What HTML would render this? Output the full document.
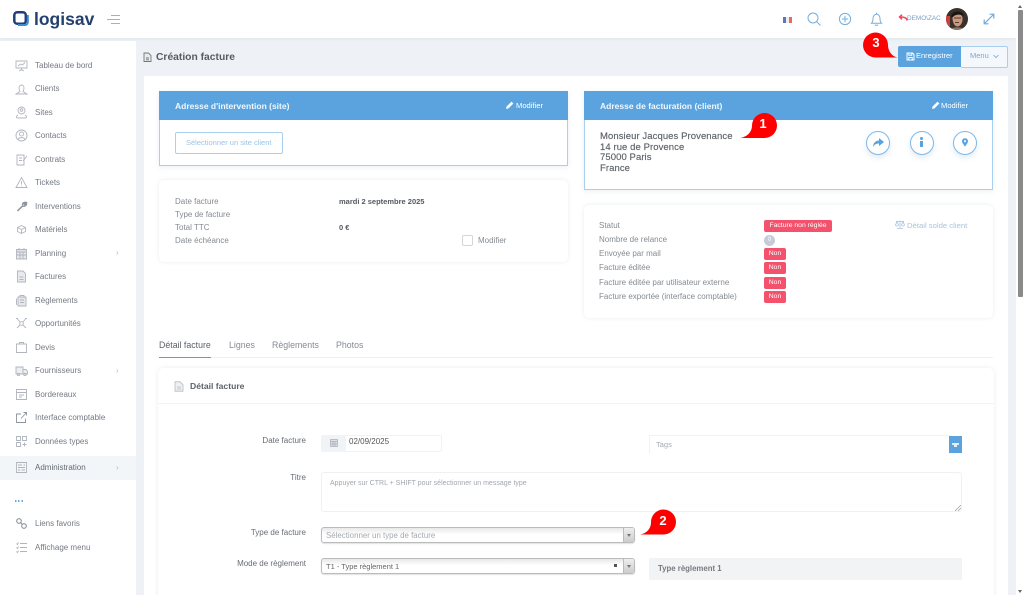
<!DOCTYPE html>
<html lang="fr"><head><meta charset="utf-8"><title>Création facture</title>
<style>
html,body{margin:0;padding:0;width:1024px;height:595px;overflow:hidden;background:#fff}
body{position:relative;font-family:"Liberation Sans",sans-serif;color:#666}
#p{position:absolute;left:0;top:0;width:1024px;height:595px;overflow:hidden;background:#eef2f6;filter:blur(.35px)}
.a,.t{position:absolute}
.t{white-space:nowrap;line-height:12px}
.nav{font-size:8px;color:#747a83;left:35px;margin-top:1px}
.ic{position:absolute;left:15px;width:13px;height:13px;fill:none;stroke:#b0b5bc;stroke-width:.9}
.lb{font-size:8px;color:#858b92;margin-top:1px}
.fl{font-size:8px;color:#666c74;text-align:right;width:120px;left:186px;margin-top:1px}
.red{position:absolute;background:#f4516c;border-radius:2px;color:#fff;font-size:6.8px;text-align:center;line-height:12px;height:12px;left:764px;width:22px}
.card{position:absolute;background:#fff;border-radius:5px;box-shadow:0 0 4px rgba(120,140,160,.16)}
.head{position:absolute;background:#5aa3de;color:#fff;height:29px}
.rnd{position:absolute;width:22px;height:22px;border:1px solid #7db8e8;border-radius:50%;top:131px;background:#fff;box-shadow:0 3px 6px rgba(120,160,200,.2)}
.sel{position:absolute;left:321px;width:312px;height:14px;border:1px solid #bbb;border-radius:3px;background:linear-gradient(#e8e8e8,#fff 45%,#fff);box-sizing:content-box;box-shadow:0 1px 1px rgba(0,0,0,.12)}
.arr{position:absolute;right:0;top:0;width:10px;height:14px;background:linear-gradient(#eee,#ccc);border-left:1px solid #bbb;border-radius:0 2px 2px 0}
.arr:after{content:"";position:absolute;left:3px;top:6px;border:2.5px solid transparent;border-top:3px solid #777}
.tab{font-size:8.8px;color:#858b93;top:339px}
</style></head><body><div id="p">

<!-- header -->
<div class="a" style="left:0;top:0;width:1016px;height:38px;background:#fff;box-shadow:0 1px 3px rgba(120,140,160,.12)"></div>
<svg class="a" style="left:13px;top:10px" width="16" height="18" fill="none"><rect x="1.300" y="2.300" width="11.500" height="11.500" rx="3" stroke="#1f3f77" stroke-width="2.500"/><path d="M5 15H12C13.500 15 14.800 13.800 14.800 12V5" stroke="#3b8ad3" stroke-width="2"/></svg>
<div class="t" style="left:34px;top:9px;font-size:17.500px;line-height:20px;font-weight:bold;color:#24406f">logisav</div>
<svg class="a" style="left:106px;top:14px" width="15" height="11" fill="none" stroke="#aab0b8" stroke-width=".9"><path d="M5 1.500H14M1 5.500H14M5 9.500H14"/></svg>

<div class="a" style="left:783px;top:17px;width:3px;height:6px;background:#5a78b8"></div>
<div class="a" style="left:786px;top:17px;width:3px;height:6px;background:#eee"></div>
<div class="a" style="left:789px;top:17px;width:3px;height:6px;background:#e66"></div>
<svg class="a" style="left:806px;top:11px" width="16" height="16" fill="none" stroke="#74aee0" stroke-width="1"><circle cx="7" cy="7" r="5"/><path d="M10.800 10.800L14.500 14.500"/></svg>
<svg class="a" style="left:838px;top:12px" width="14" height="14" fill="none" stroke="#74aee0" stroke-width="1"><circle cx="7" cy="7" r="5.600"/><path d="M7 3.800V10.200M3.800 7H10.200"/></svg>
<svg class="a" style="left:870px;top:12px" width="13" height="14" fill="none" stroke="#74aee0" stroke-width="1"><path d="M1.500 11.200C3 9.800 3 8 3 6.500 3 4 4.500 2.300 6.500 2.300S10 4 10 6.500C10 8 10 9.800 11.500 11.200ZM5 12.600C5.500 13.600 7.500 13.600 8 12.600M6.500 2.300V.8"/></svg>
<svg class="a" style="left:898px;top:14px" width="10" height="8" fill="none" stroke="#f0475a" stroke-width="1.500"><path d="M9 6.500C9 4 7 3 2.500 3M4 .7L1.500 3L4 5.300"/></svg>
<div class="t" style="left:907px;top:13px;font-size:6.400px;color:#7a9fc6">DEMO\ZAC</div>
<svg class="a" style="left:946px;top:8px" width="22" height="22"><defs><clipPath id="av"><circle cx="11" cy="11" r="11"/></clipPath></defs><g clip-path="url(#av)"><rect width="22" height="22" fill="#3a302c"/><rect x="0" y="8" width="4" height="14" fill="#c9403c"/><path d="M6.500 10C6.500 5 16 4 16.500 10C17 15 14 18.500 11.500 18.500C9 18.500 6.500 15 6.500 10Z" fill="#c99a80"/><path d="M5 9C5 3 16 1 18 8C15 6 9 6 7 9Z" fill="#1c1513"/><path d="M8 10H15M9 14.500H13" stroke="#5a3a2c" stroke-width="1"/><path d="M4 22C6 18.500 16 18.500 19 22Z" fill="#8a7a70"/></g></svg>
<svg class="a" style="left:983px;top:13px" width="12" height="12" fill="none" stroke="#6fabe0" stroke-width="1.200"><path d="M1.500 10.500L10.500 1.500M6.500 1.200H10.800V5.500M1.200 6.500V10.800H5.500"/></svg>

<!-- scrollbar -->
<div class="a" style="left:1016px;top:0;width:8px;height:595px;background:#fff"></div>
<div class="a" style="left:1018px;top:10px;width:5px;height:287px;background:#8a8a8a;border-radius:1px"></div>
<div class="a" style="left:1018px;top:3px;border:2.500px solid transparent;border-bottom:3px solid #666"></div>
<div class="a" style="left:1018px;top:590px;border:2.500px solid transparent;border-top:3px solid #666"></div>

<!-- sidebar -->
<div class="a" style="left:0;top:41px;width:136px;height:554px;background:#fff"></div>
<div class="a" style="left:0;top:456px;width:136px;height:24px;background:#f3f6f8"></div>

<svg class="ic" style="top:59px" viewBox="0 0 13 13"><path d="M1 2H12V9H1ZM3 7L5.500 5L7.500 6L10 3.500M6.500 9V11M4 12L6.500 10.500L9 12"/></svg>
<svg class="ic" style="top:82px" viewBox="0 0 13 13"><path d="M4 6C4 2 9 2 9 6C9 8 8 9 8 9.500L12 12H1L5 9.500C5 9 4 8 4 6Z"/></svg>
<svg class="ic" style="top:106px" viewBox="0 0 13 13"><circle cx="6.500" cy="4.500" r="3.500"/><circle cx="6.500" cy="4" r="1.300"/><path d="M3 9C1 10 1 12 3 12H10C12 12 12 10 10 9"/></svg>
<svg class="ic" style="top:129px" viewBox="0 0 13 13"><circle cx="6.500" cy="6.500" r="5.500"/><circle cx="6.500" cy="5" r="2"/><path d="M3 10.500C4 8 9 8 10 10.500"/></svg>
<svg class="ic" style="top:153px" viewBox="0 0 13 13"><path d="M2 2H9V12H2ZM4 5H7M4 7.500H7M8 8L12 3"/></svg>
<svg class="ic" style="top:176px" viewBox="0 0 13 13"><path d="M6.500 1.500L12 11.500H1ZM6.500 5V8.500M6.500 9.500V10.300"/></svg>
<svg class="ic" style="top:200px;stroke:#8d939b;stroke-width:1.500" viewBox="0 0 13 13"><path d="M2.500 11L8 5.500M7.500 5C7.500 3 9.500 2 11 2.500L9.500 4L10 4.500L11.500 3.500C11.500 5.500 9.500 6.500 8 6"/></svg>
<svg class="ic" style="top:223px" viewBox="0 0 13 13"><path d="M6.500 2.500L10.500 4.500V8.500L6.500 10.500L2.500 8.500V4.500ZM2.500 4.500L6.500 6.500L10.500 4.500M6.500 6.500V10.500"/></svg>
<svg class="ic" style="top:247px" viewBox="0 0 13 13"><path d="M1.500 2.500H11.500V12H1.500Z" fill="#e6e8eb"/><path d="M1.500 5H11.500M4 1V3.500M9 1V3.500M1.500 8H11.500M5 5V12M8 5V12"/></svg>
<svg class="ic" style="top:270px" viewBox="0 0 13 13"><path d="M2.500 1H8L10.500 3.500V12H2.500Z" fill="#e8eaed"/><path d="M4.500 7H8.500M4.500 9.500H8.500"/></svg>
<svg class="ic" style="top:294px" viewBox="0 0 13 13"><path d="M3 3H11V12H3Z" fill="#e6e8eb"/><path d="M1.500 4.500V11M5 3V1.500H9V3M5 6H9M5 8.500H9"/></svg>
<svg class="ic" style="top:317px" viewBox="0 0 13 13"><circle cx="6.500" cy="6.500" r="1.800"/><path d="M5 5L2.500 2M8 5L10.500 2M5 8L2 11M8 8L11 11M1 1.500H3M10 1.500H12"/></svg>
<svg class="ic" style="top:341px" viewBox="0 0 13 13"><path d="M1.500 3H11.500V11.500H1.500ZM4.500 3V1.500H8.500V3"/></svg>
<svg class="ic" style="top:364px" viewBox="0 0 13 13"><path d="M1 3H8V10H1ZM8 5.500H11L12.500 7.500V10H8" fill="#eceef0"/><circle cx="3.500" cy="10.500" r="1.200"/><circle cx="10" cy="10.500" r="1.200"/></svg>
<svg class="ic" style="top:388px" viewBox="0 0 13 13"><path d="M1.500 1.500H11.500V11.500H1.500ZM1.500 4.500H11.500M4 7H9M4 9H7"/></svg>
<svg class="ic" style="top:411px;stroke:#8d939b" viewBox="0 0 13 13"><path d="M10.500 7.500V11.500H1.500V3H6M6 7.500L11.500 1.500M8.500 1.500H11.500V4.500"/></svg>
<svg class="ic" style="top:435px" viewBox="0 0 13 13"><path d="M1.500 1.500H5.500V5.500H1.500ZM7.500 1.500H11.500V5.500H7.500ZM1.500 7.500H5.500V11.500H1.500ZM7.500 9.500H11.500M9.500 7.500V11.500"/></svg>
<svg class="ic" style="top:461px" viewBox="0 0 13 13"><path d="M1.500 1.500H11.500V11.500H1.500ZM3 4H7M8.500 4H10M3 6.500H10M3 9H5M6.500 9H10" /></svg>
<svg class="ic" style="top:517px;stroke:#8d939b;stroke-width:1.100" viewBox="0 0 13 13"><circle cx="4" cy="4" r="2.300"/><circle cx="9" cy="9" r="2.300"/><path d="M5.500 5.500L7.500 7.500"/></svg>
<svg class="ic" style="top:541px" viewBox="0 0 13 13"><path d="M5 2.500H12M5 6.500H12M5 10.500H12M1.500 2.500L2.500 3.500L3.500 1.500M1.500 6.500L2.500 7.500L3.500 5.500M1.500 10.500L2.500 11.500L3.500 9.500"/></svg>

<div class="t nav" style="top:59px">Tableau de bord</div>
<div class="t nav" style="top:82px">Clients</div>
<div class="t nav" style="top:106px">Sites</div>
<div class="t nav" style="top:129px">Contacts</div>
<div class="t nav" style="top:153px">Contrats</div>
<div class="t nav" style="top:176px">Tickets</div>
<div class="t nav" style="top:200px">Interventions</div>
<div class="t nav" style="top:223px">Matériels</div>
<div class="t nav" style="top:247px">Planning</div>
<div class="t nav" style="top:270px">Factures</div>
<div class="t nav" style="top:294px">Règlements</div>
<div class="t nav" style="top:317px">Opportunités</div>
<div class="t nav" style="top:341px">Devis</div>
<div class="t nav" style="top:364px">Fournisseurs</div>
<div class="t nav" style="top:388px">Bordereaux</div>
<div class="t nav" style="top:411px">Interface comptable</div>
<div class="t nav" style="top:435px">Données types</div>
<div class="t nav" style="top:461px;color:#636a74">Administration</div>
<div class="t nav" style="top:517px">Liens favoris</div>
<div class="t nav" style="top:541px">Affichage menu</div>
<div class="t" style="left:116px;top:247px;font-size:8px;color:#b5b9bf">›</div>
<div class="t" style="left:116px;top:365px;font-size:8px;color:#b5b9bf">›</div>
<div class="t" style="left:116px;top:462px;font-size:8px;color:#b5b9bf">›</div>
<div class="a" style="left:15px;top:500px;width:8px;height:1.500px;background:repeating-linear-gradient(90deg,#6aa9e0 0 1.500px,transparent 1.500px 3.200px)"></div>

<!-- sub header -->
<svg class="a" style="left:143px;top:52px" width="9" height="10" fill="#e8eaec" stroke="#777" stroke-width=".9"><path d="M1 1H5.500L8 3.500V9.500H1Z"/><path d="M3 6H6M3 7.800H6"/></svg>
<div class="t" style="left:156px;top:51px;font-size:10.300px;line-height:14px;font-weight:bold;color:#575c63">Création facture</div>
<div class="a" style="left:898px;top:46px;width:63px;height:21px;background:#5aa3de;border-radius:2px 0 0 2px"></div>
<svg class="a" style="left:906px;top:52px" width="9" height="9" fill="none" stroke="#fff" stroke-width="1"><path d="M1 1H6.500L8 2.500V8H1ZM2.800 1V3.300H5.800V1M2.800 8V5.500H6.200V8"/></svg>
<div class="t" style="left:916px;top:50px;font-size:7.500px;color:#fff">Enregistrer</div>
<div class="a" style="left:961px;top:46px;width:46px;height:20px;background:#f4f8fc;border:1px solid #a8cfee;border-left:0;border-radius:0 2px 2px 0"></div>
<div class="t" style="left:970px;top:50px;font-size:7.500px;color:#7aa7d0">Menu</div>
<svg class="a" style="left:993px;top:54px" width="6" height="5" fill="none" stroke="#7aa7d0" stroke-width=".8"><path d="M.5 1L3 3.500L5.500 1"/></svg>

<!-- main white -->
<div class="a" style="left:144px;top:76px;width:864px;height:519px;background:#fff"></div>

<!-- left panel -->
<div class="a" style="left:159px;top:91px;width:407px;height:73px;border:1px solid #a8cfee;background:#fff;box-shadow:0 1px 5px rgba(120,150,190,.15)"></div>
<div class="head" style="left:159px;top:91px;width:409px"></div>
<div class="t" style="left:175px;top:100px;font-size:8.500px;font-weight:bold;color:#fff;opacity:.92">Adresse d'intervention (site)</div>
<svg class="a" style="left:506px;top:101px" width="8" height="8" fill="#fff"><path d="M0 8L.6 5.500L5.500.6L7.400 2.500L2.500 7.400Z"/></svg>
<div class="t" style="left:516px;top:100px;font-size:7.600px;color:#fff">Modifier</div>
<div class="a" style="left:175px;top:132px;width:106px;height:20px;border:1px solid #a8cfee;border-radius:2px;background:#fff"></div>
<div class="t" style="left:186px;top:137px;font-size:7.500px;color:#9cc3e6">Sélectionner un site client</div>

<!-- right panel -->
<div class="a" style="left:584px;top:91px;width:407px;height:97px;border:1px solid #a8cfee;background:#fff;box-shadow:0 1px 5px rgba(120,150,190,.15)"></div>
<div class="head" style="left:584px;top:91px;width:409px"></div>
<div class="t" style="left:600px;top:100px;font-size:8.500px;font-weight:bold;color:#fff;opacity:.92">Adresse de facturation (client)</div>
<svg class="a" style="left:932px;top:101px" width="8" height="8" fill="#fff"><path d="M0 8L.6 5.500L5.500.6L7.400 2.500L2.500 7.400Z"/></svg>
<div class="t" style="left:941px;top:100px;font-size:7.600px;color:#fff">Modifier</div>
<div class="t" style="left:600px;top:132px;font-size:9.500px;line-height:10.500px;color:#5d6269;letter-spacing:.08px;-webkit-text-stroke:.15px #5d6269">Monsieur Jacques Provenance<br>14 rue de Provence<br>75000 Paris<br>France</div>
<div class="rnd" style="left:866px"></div>
<div class="rnd" style="left:910px"></div>
<div class="rnd" style="left:953px"></div>
<svg class="a" style="left:872px;top:138px" width="12" height="10" fill="#5aa3de"><path d="M7 0L12 4L7 8V5.500C4 5.500 2.500 6.500 1 9C1 5 3.500 2.700 7 2.500Z"/></svg>
<div class="a" style="left:920px;top:137px;width:3px;height:3px;background:#5aa3de;border-radius:50%"></div>
<div class="a" style="left:920px;top:141px;width:3px;height:6px;background:#5aa3de"></div>
<svg class="a" style="left:962px;top:138px" width="6" height="9" viewBox="0 0 7 10" fill="#5aa3de"><path d="M3.500 0C6 0 7 2 7 3.500C7 5.500 4.500 8 3.500 10C2.500 8 0 5.500 0 3.500C0 2 1 0 3.500 0Z"/><circle cx="3.500" cy="3.500" r="1.200" fill="#fff"/></svg>

<!-- left info card -->
<div class="card" style="left:159px;top:180px;width:409px;height:82px"></div>
<div class="t lb" style="left:175px;top:195px">Date facture</div>
<div class="t lb" style="left:175px;top:208px">Type de facture</div>
<div class="t lb" style="left:175px;top:221px">Total TTC</div>
<div class="t lb" style="left:175px;top:234px">Date échéance</div>
<div class="t" style="left:339px;top:196px;font-size:7.500px;font-weight:bold;color:#555a61">mardi 2 septembre 2025</div>
<div class="t" style="left:339px;top:222px;font-size:7.500px;font-weight:bold;color:#555a61">0 €</div>
<div class="a" style="left:462px;top:235px;width:9px;height:9px;border:1px solid #cfd6de;border-radius:2px;background:#fff"></div>
<div class="t lb" style="left:478px;top:234px">Modifier</div>

<!-- right info card -->
<div class="card" style="left:584px;top:205px;width:409px;height:113px"></div>
<div class="t lb" style="left:599px;top:219px">Statut</div>
<div class="t lb" style="left:599px;top:233px">Nombre de relance</div>
<div class="t lb" style="left:599px;top:247px">Envoyée par mail</div>
<div class="t lb" style="left:599px;top:261px">Facture éditée</div>
<div class="t lb" style="left:599px;top:276px">Facture éditée par utilisateur externe</div>
<div class="t lb" style="left:599px;top:290px">Facture exportée (interface comptable)</div>
<div class="red" style="top:220px;width:68px">Facture non réglée</div>
<div class="a" style="left:764px;top:235px;width:11px;height:11px;border-radius:50%;background:#c7cbd8;color:#fff;font-size:6px;line-height:11px;text-align:center">0</div>
<div class="red" style="top:248px">Non</div>
<div class="red" style="top:262px">Non</div>
<div class="red" style="top:277px">Non</div>
<div class="red" style="top:291px">Non</div>
<svg class="a" style="left:895px;top:220px" width="10" height="9" fill="none" stroke="#a9c3dc" stroke-width=".8"><path d="M5 .5V8M2 8.500H8M1 1.500H9M2 1.500L.5 5C1 6.500 3 6.500 3.500 5ZM8 1.500L6.500 5C7 6.500 9 6.500 9.500 5Z"/></svg>
<div class="t" style="left:907px;top:220px;font-size:7.700px;color:#a9c3dc">Détail solde client</div>

<!-- tabs -->
<div class="a" style="left:159px;top:357px;width:834px;height:1px;background:#eef1f4"></div>
<div class="a" style="left:159px;top:357px;width:52px;height:1px;background:#8d9299"></div>
<div class="t tab" style="left:159px;color:#5d6269">Détail facture</div>
<div class="t tab" style="left:229px">Lignes</div>
<div class="t tab" style="left:272px">Règlements</div>
<div class="t tab" style="left:336px">Photos</div>

<!-- detail card -->
<div class="card" style="left:158px;top:368px;width:836px;height:240px"></div>
<div class="a" style="left:158px;top:403px;width:836px;height:1px;background:#f1f3f5"></div>
<svg class="a" style="left:174px;top:381px" width="10" height="11" fill="#eef0f2" stroke="#b5bac0" stroke-width=".8"><path d="M1 .8H6L9 3.800V10.200H1Z"/><path d="M3 6H7M3 8H7"/></svg>
<div class="t" style="left:190px;top:380px;font-size:8.600px;font-weight:bold;color:#5d6269">Détail facture</div>

<div class="t fl" style="top:434px">Date facture</div>
<div class="t fl" style="top:471px">Titre</div>
<div class="t fl" style="top:526px">Type de facture</div>
<div class="t fl" style="top:557px">Mode de règlement</div>

<div class="a" style="left:321px;top:435px;width:119px;height:15px;border:1px solid #f0f3f6;border-radius:2px;background:#fff"></div>
<div class="a" style="left:321px;top:435px;width:25px;height:17px;background:#f1f4f7;border-radius:2px 0 0 2px"></div>
<svg class="a" style="left:330px;top:438px" width="8" height="9" fill="#dde0e4" stroke="#aab0b7" stroke-width=".7"><path d="M.5 1.500H7.500V8.500H.5ZM.5 3.500H7.500M.5 6H7.500M3 3.500V8.500M5 3.500V8.500"/></svg>
<div class="t" style="left:349px;top:436px;font-size:8px;color:#555">02/09/2025</div>

<div class="a" style="left:649px;top:435px;width:300px;height:18px;border:1px solid #f0f3f6;border-bottom:0;background:#fff"></div>
<div class="t" style="left:656px;top:439px;font-size:7.500px;color:#a6abb1">Tags</div>
<div class="a" style="left:949px;top:436px;width:13px;height:17px;background:#5aa3de"></div>
<div class="a" style="left:952px;top:443px;width:7px;height:2px;background:#dff0fb"></div>
<div class="a" style="left:954px;top:445px;width:3px;height:2px;background:#dff0fb"></div>

<div class="a" style="left:321px;top:472px;width:639px;height:38px;border:1px solid #eef1f4;border-radius:3px;background:#fff"></div>
<div class="t" style="left:330px;top:478px;font-size:7px;color:#a2a7ad">Appuyer sur CTRL + SHIFT pour sélectionner un message type</div>
<svg class="a" style="left:955px;top:505px" width="6" height="6" stroke="#999" stroke-width=".7"><path d="M0 6L6 0M3 6L6 3"/></svg>

<div class="sel" style="top:527px"><div class="arr"></div></div>
<div class="t" style="left:326px;top:530px;font-size:7.900px;color:#a4a9af">Sélectionner un type de facture</div>
<div class="sel" style="top:558px"><div class="arr"></div></div>
<div class="t" style="left:326px;top:561px;font-size:7.500px;color:#666">T1 - Type règlement 1</div>
<div class="a" style="left:614px;top:564px;width:3px;height:3px;background:#555"></div>

<div class="a" style="left:649px;top:558px;width:313px;height:22px;background:#f1f3f5;border-radius:2px"></div>
<div class="t" style="left:658px;top:563px;font-size:7.800px;font-weight:bold;color:#777b81">Type règlement 1</div>

<!-- callouts -->
<svg class="a" style="left:0;top:0" width="1024" height="595" fill="#fe0000">
<path d="M740 138C747 137 752 132 752 125.500A12.500 12.500 0 1 1 764.500 138Z"/>
<path d="M640 534.500C647 533.500 651 528 651 522.500A12.500 12.500 0 1 1 663.500 534.500Z"/>
<path d="M898 57.500C891 56.500 888 50 888 45A12.500 12.500 0 1 0 875.500 57.500Z"/>
</svg>
<div class="t" style="left:757px;top:116px;width:12px;text-align:center;font-size:13px;line-height:15px;font-weight:bold;color:#fff">1</div>
<div class="t" style="left:657px;top:513px;width:12px;text-align:center;font-size:13px;line-height:15px;font-weight:bold;color:#fff">2</div>
<div class="t" style="left:870px;top:35px;width:12px;text-align:center;font-size:13px;line-height:15px;font-weight:bold;color:#fff">3</div>

</div></body></html>
